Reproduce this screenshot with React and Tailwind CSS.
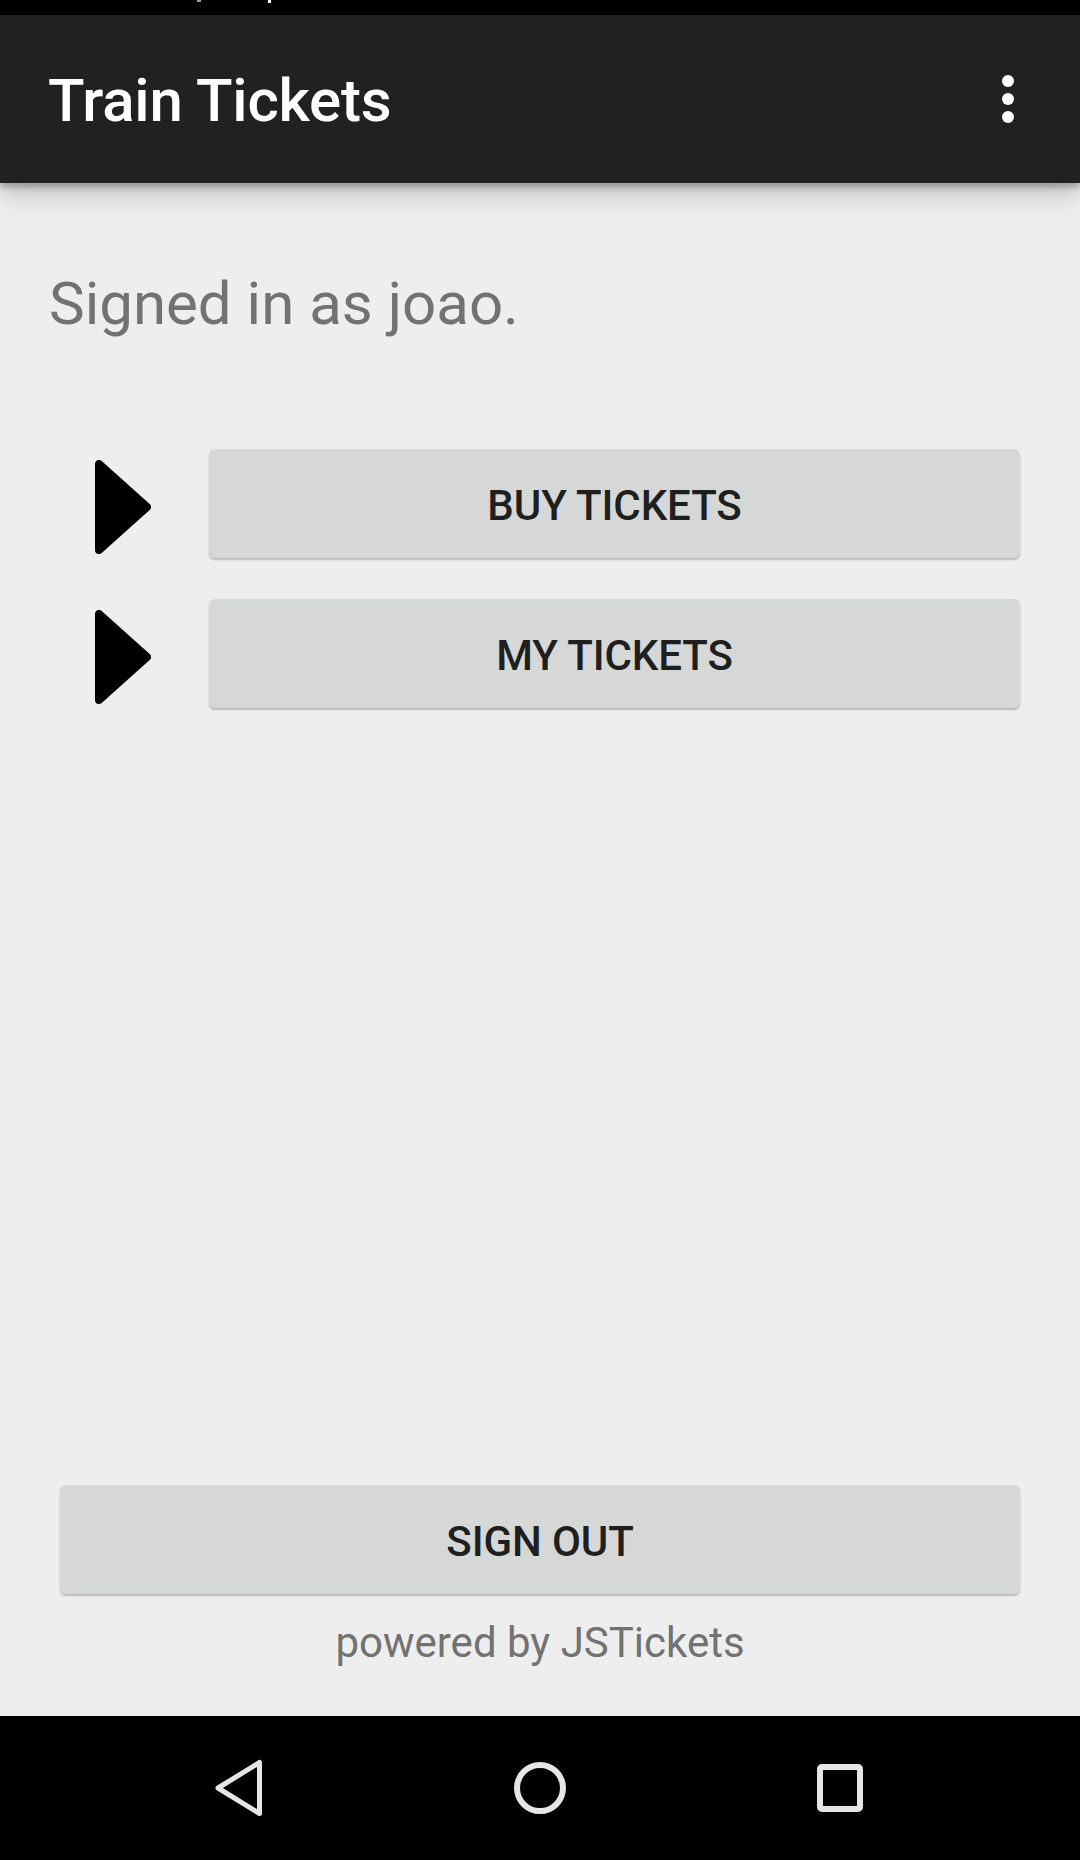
import React from "react";

function PlayArrow() {
  return (
    <svg width="56" height="94" viewBox="0 0 56 94" className="shrink-0">
      <path d="M4 4 L4 90 L52 47 Z" fill="#000" stroke="#000" strokeWidth="8" strokeLinejoin="round" />
    </svg>
  );
}

function GrayButton({ label, className = "" }) {
  return (
    <div
      className={
        "h-[109px] flex items-center justify-center rounded-[6px] bg-[#d6d7d7] shadow-[0_2px_2px_rgba(0,0,0,0.22)] " +
        className
      }
    >
      <span className="pt-[4px] text-[42px] leading-none font-medium text-[#1f1f1f] tracking-[-0.1px]">{label}</span>
    </div>
  );
}

export default function App() {
  return (
    <div className="w-[1080px] h-[1860px] flex flex-col bg-[#eeeeee] font-['Roboto',sans-serif] overflow-hidden">
      {/* status bar */}
      <div className="h-[15px] bg-black flex items-start shrink-0">
        <div className="ml-[197px] w-[4px] h-[2px] bg-[#9a9a9a]" />
        <div className="ml-[67px] w-[3px] h-[3px] bg-white" />
      </div>

      {/* app bar */}
      <div className="relative z-10 h-[168px] shrink-0 bg-[#212121] flex items-center pl-[48px] pr-[66px] shadow-[0_4px_6px_rgba(0,0,0,0.26),0_12px_24px_rgba(0,0,0,0.18)]">
        <div className="flex-1 pt-[4px] text-white text-[60px] leading-none font-medium tracking-[-0.2px]">Train Tickets</div>
        <div className="flex flex-col items-center gap-[6px]">
          <div className="w-[12px] h-[12px] rounded-full bg-white" />
          <div className="w-[12px] h-[12px] rounded-full bg-white" />
          <div className="w-[12px] h-[12px] rounded-full bg-white" />
        </div>
      </div>

      {/* main */}
      <div className="flex-1 flex flex-col">
        <div className="mt-[91px] pl-[49px] text-[60px] leading-none text-[#727272]">Signed in as joao.</div>

        <div className="mt-[115px] flex items-start pl-[95px] pr-[60px]">
          <div className="mt-[11px]">
            <PlayArrow />
          </div>
          <GrayButton label="BUY TICKETS" className="ml-[58px] flex-1" />
        </div>

        <div className="mt-[41px] flex items-start pl-[95px] pr-[60px]">
          <div className="mt-[11px]">
            <PlayArrow />
          </div>
          <GrayButton label="MY TICKETS" className="ml-[58px] flex-1" />
        </div>

        <div className="flex-1" />

        <GrayButton label="SIGN OUT" className="mx-[60px]" />
        <div className="mt-[28px] mb-[52px] text-center text-[42px] leading-none text-[#727272]">powered by JSTickets</div>
      </div>

      {/* nav bar */}
      <div className="h-[144px] shrink-0 bg-black flex items-center justify-center gap-[240px]">
        <svg width="60" height="60" viewBox="0 0 60 60">
          <path d="M49.5 4.5 L49.5 55.5 L8 30 Z" fill="none" stroke="#e6e6e6" strokeWidth="5" strokeLinejoin="round" />
        </svg>
        <svg width="60" height="60" viewBox="0 0 60 60">
          <circle cx="30" cy="30" r="23" fill="none" stroke="#e6e6e6" strokeWidth="6" />
        </svg>
        <svg width="60" height="60" viewBox="0 0 60 60">
          <rect x="10" y="9" width="40" height="42" rx="2" fill="none" stroke="#e6e6e6" strokeWidth="6" />
        </svg>
      </div>
    </div>
  );
}
